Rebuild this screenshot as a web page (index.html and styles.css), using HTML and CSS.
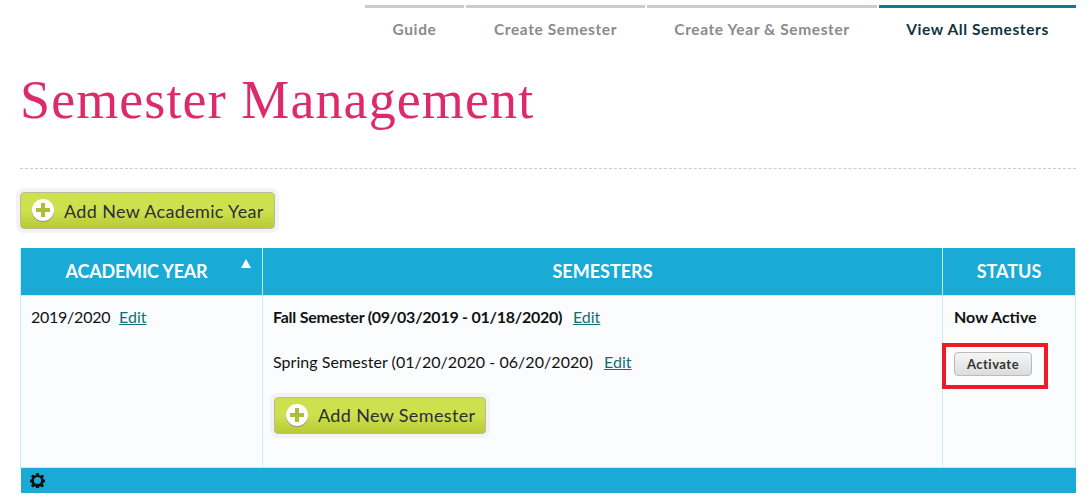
FILE: index.html
```html
<!DOCTYPE html>
<html lang="en">

<head>
  <meta charset="UTF-8">
  <title>Semester Management</title>
  <link rel="stylesheet" href="styles.css">
</head>

<body>
  <nav class="steps">
    <a class="step step-guide" href="#">Guide</a>
    <a class="step step-create" href="#">Create Semester</a>
    <a class="step step-year" href="#">Create Year &amp; Semester</a>
    <a class="step step-all active" href="#">View All Semesters</a>
  </nav>

  <h1>Semester Management</h1>

  <div class="toolbar">
    <a class="add-btn" href="#">
      <svg class="plus" viewBox="0 0 22 23" width="22" height="23">
        <circle cx="11" cy="12" r="11" fill="#8f9384"/>
        <circle cx="11" cy="11" r="11" fill="#fff"/>
        <path d="M9 4h4v5h5v4h-5v5H9v-5H4V9h5z" fill="#a9bf35"/>
      </svg>
      Add New Academic Year
    </a>
  </div>

  <table class="semesters">
    <thead>
      <tr>
        <th class="col-year">ACADEMIC YEAR<span class="sort"></span></th>
        <th class="col-sem">SEMESTERS</th>
        <th class="col-status">STATUS</th>
      </tr>
    </thead>
    <tbody>
      <tr>
        <td class="year-cell">2019/2020 <a class="edit" href="#">Edit</a></td>
        <td class="sem-cell">
          <p class="line current term-active">Fall Semester (09/03/2019 - 01/18/2020) <a class="edit" href="#">Edit</a></p>
          <p class="line term-idle">Spring Semester (01/20/2020 - 06/20/2020) <a class="edit" href="#">Edit</a></p>
          <a class="add-btn" href="#">
            <svg class="plus" viewBox="0 0 22 23" width="22" height="23">
              <circle cx="11" cy="12" r="11" fill="#8f9384"/>
              <circle cx="11" cy="11" r="11" fill="#fff"/>
              <path d="M9 4h4v5h5v4h-5v5H9v-5H4V9h5z" fill="#a9bf35"/>
            </svg>
            Add New Semester
          </a>
        </td>
        <td class="status-cell">
          <p class="line current">Now Active</p>
          <button class="activate">Activate</button>
          <div class="callout"></div>
        </td>
      </tr>
    </tbody>
    <tfoot>
      <tr>
        <td colspan="3">
          <svg class="gear" viewBox="0 0 16 16" width="15" height="15">
            <path d="M6.6 0h2.800l.4 2.200 1.300.6L13 1.500l2 2-1.300 1.900.5 1.300 2.200.4v2.800l-2.200.4-.5 1.300 1.300 1.900-2 2-1.900-1.300-1.300.5-.4 2.200H6.600l-.4-2.200-1.300-.5L3 15.500l-2-2 1.300-1.900-.5-1.300L0 9.900V7.100l1.800-.4.5-1.300L1 3.500l2-2 1.900 1.300 1.300-.6zM8 4.200a3.800 3.800 0 1 0 0 7.600 3.800 3.800 0 0 0 0-7.600z" fill="#111" fill-rule="evenodd"/>
          </svg>
        </td>
      </tr>
    </tfoot>
  </table>
</body>

</html>
```

FILE: styles.css
```css
body {
  margin: 0;
  padding: 0 14px 0 20px;
  font-family: Lato, Arial, sans-serif;
  font-size: 16px;
  color: #111;
  background-color: #fff;
}

.steps {
  display: flex;
  justify-content: flex-end;
  gap: 2px;
  height: 50px;
  padding-top: 5px;
  box-sizing: border-box;
}

.step {
  border-top: 3px solid #ccc;
  padding-top: 12px;
  text-align: center;
  font-size: 15.5px;
  font-weight: bold;
  letter-spacing: 0.6px;
  color: #8b8b8b;
  text-decoration: none;
}

.step-guide { width: 99px; }
.step-create { width: 179px; }
.step-year { width: 230px; }
.step-all { width: 197px; }

.step.active {
  border-top-color: #0a7a9a;
  color: #12343f;
}

h1 {
  margin: 0;
  padding: 19px 0 37px;
  height: 62px;
  border-bottom: 1px dashed #ccc;
  font-family: "Liberation Serif", serif;
  font-size: 54px;
  line-height: 62px;
  font-weight: normal;
  letter-spacing: 1.1px;
  color: #dc2a6c;
}

.toolbar {
  padding-top: 23px;
  margin-bottom: 18px;
  height: 38px;
}

.add-btn {
  display: inline-flex;
  align-items: center;
  gap: 10px;
  height: 35px;
  padding: 0 10px 0 11px;
  border: 1px solid #b9bb9c;
  border-radius: 4px;
  background: linear-gradient(#cde14e 50%, #b8ca35);
  box-shadow: 0 0 0 4px #f3f3f5;
  font-size: 18px;
  letter-spacing: 0.35px;
  color: #2d2d3a;
  text-decoration: none;
}

.semesters {
  width: 1056px;
  table-layout: fixed;
  border-collapse: collapse;
}

.semesters th {
  height: 47px;
  padding: 0 0 1px;
  box-sizing: border-box;
  background-color: #1aaad6;
  border-left: 1px solid #c9ecf5;
  border-right: 1px solid #c9ecf5;
  color: #fff;
  font-size: 18px;
  font-weight: bold;
  position: relative;
}

.semesters th.col-year {
  width: 242px;
  padding-right: 10px;
  letter-spacing: -0.2px;
}

.semesters th.col-status { width: 133px; }

.sort {
  position: absolute;
  top: 11px;
  right: 11px;
  border-left: 5.5px solid transparent;
  border-right: 5.5px solid transparent;
  border-bottom: 9px solid #fff;
}

.semesters tbody td {
  height: 172px;
  padding: 11px 11px 0;
  box-sizing: border-box;
  vertical-align: top;
  background-color: #fbfcfe;
  border: 1px solid #c9ecf5;
  line-height: 20px;
}

.semesters tbody td.year-cell,
.semesters tbody td.sem-cell {
  padding-left: 10px;
}

.year-cell {
  letter-spacing: -0.25px;
}

.year-cell .edit {
  margin-left: 5px;
}

.sem-cell .add-btn {
  margin-left: 1px;
}

.semesters tfoot td {
  height: 25px;
  padding: 0 0 0 9px;
  vertical-align: top;
  background-color: #1aaad6;
  line-height: 0;
}

.line {
  margin: 0 0 25px;
}

.current {
  font-weight: bold;
}

.term-active {
  letter-spacing: -0.25px;
}

.term-idle {
  letter-spacing: 0.05px;
}

.edit {
  margin-left: 7px;
  letter-spacing: 0;
  color: #0f6f73;
  font-weight: normal;
}

.status-cell {
  position: relative;
}

.activate {
  display: block;
  width: 78px;
  height: 24px;
  margin-top: 0;
  padding: 0;
  border: 1px solid #bbb;
  border-radius: 4px;
  background: linear-gradient(#f6f6f6, #dcdcdc);
  font-family: Lato, Arial, sans-serif;
  font-size: 13px;
  font-weight: bold;
  letter-spacing: 0.5px;
  color: #333;
}

.callout {
  position: absolute;
  left: -1px;
  top: 47px;
  width: 98px;
  height: 38px;
  border: 4px solid #ed1c24;
}

.gear {
  display: block;
  margin-top: 5px;
}
```
